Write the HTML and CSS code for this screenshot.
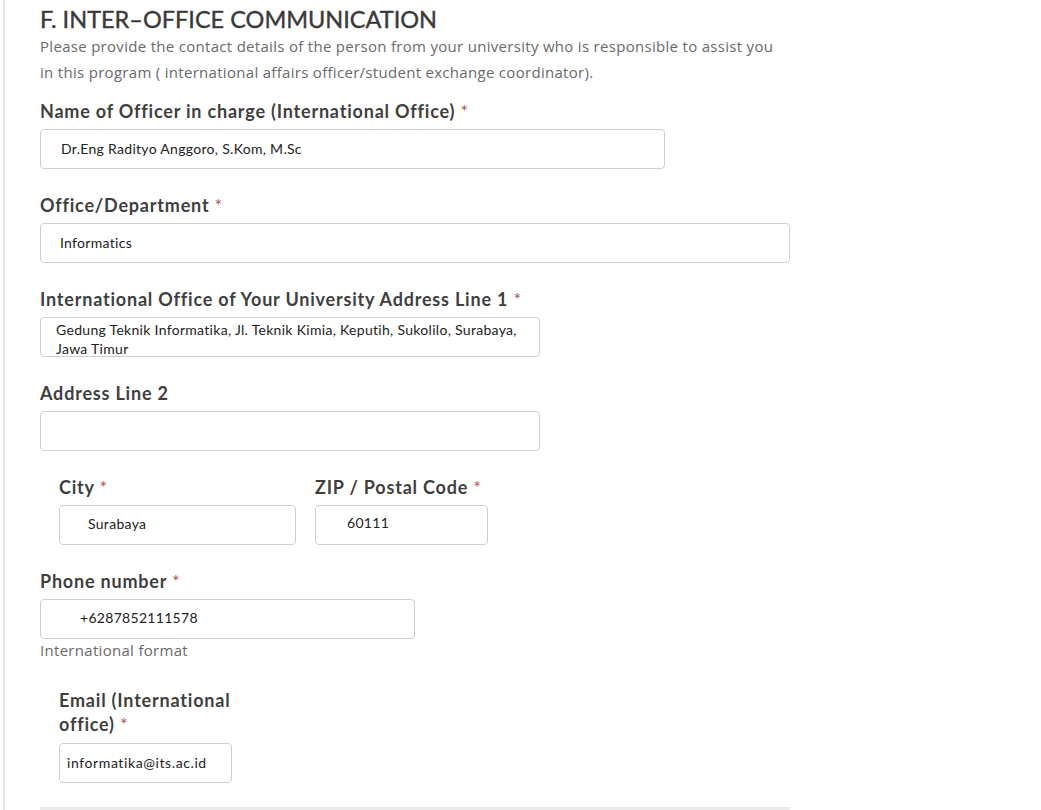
FILE: index.html
```html
<!DOCTYPE html>
<html>
<head>
<meta charset="utf-8">
<link rel="stylesheet" href="styles.css">
</head>
<body>
<div class="page">
  <h2 class="title">F. INTER–OFFICE COMMUNICATION</h2>
  <p class="desc">Please provide the contact details of the person from your university who is responsible to assist you<br>in this program ( international affairs officer/student exchange coordinator).</p>

  <div class="field">
    <label class="label">Name of Officer in charge (International Office) <span class="req">*</span></label>
    <input class="input w-name pad-name" type="text" value="Dr.Eng Radityo Anggoro, S.Kom, M.Sc">
  </div>

  <div class="field">
    <label class="label">Office/Department <span class="req">*</span></label>
    <input class="input w-full pad-office" type="text" value="Informatics">
  </div>

  <div class="field">
    <label class="label">International Office of Your University Address Line 1 <span class="req">*</span></label>
    <textarea class="input area w-addr">Gedung Teknik Informatika, Jl. Teknik Kimia, Keputih, Sukolilo, Surabaya,
Jawa Timur</textarea>
  </div>

  <div class="field">
    <label class="label">Address Line 2</label>
    <input class="input w-addr" type="text" value="">
  </div>

  <div class="field row">
    <div class="col">
      <label class="label">City <span class="req">*</span></label>
      <input class="input w-city pad-city" type="text" value="Surabaya">
    </div>
    <div class="col">
      <label class="label">ZIP / Postal Code <span class="req">*</span></label>
      <input class="input w-zip pad-zip" type="text" value="60111">
    </div>
  </div>

  <div class="field phone">
    <label class="label">Phone number <span class="req">*</span></label>
    <input class="input w-phone pad-phone" type="text" value="+6287852111578">
    <div class="help">International format</div>
  </div>

  <div class="field email">
    <label class="label narrow"><span class="line">Email (International</span><span class="line">office) <span class="req">*</span></span></label>
    <input class="input w-email pad-email" type="text" value="informatika@its.ac.id">
  </div>

  <div class="bar"></div>
</div>
</body>
</html>
```

FILE: styles.css
```css
html, body {
  margin: 0;
  padding: 0;
  background: #fff;
}
body {
  font-family: Lato, "Open Sans", sans-serif;
  color: #3d3d3d;
  overflow: hidden;
  height: 810px;
}
.page {
  margin-left: 3px;
  border-left: 2px solid #e6e6e6;
  padding-left: 35px;
  padding-top: 5px;
  min-height: 810px;
  box-sizing: border-box;
}
.title {
  margin: 0;
  font-family: Lato, sans-serif;
  font-weight: 400;
  font-size: 23.5px;
  line-height: 28px;
  color: #3a3a3a;
  letter-spacing: 0;
  -webkit-text-stroke: 0.4px #3a3a3a;
}
.desc {
  margin: 0 0 14px;
  font-family: "Open Sans", sans-serif;
  font-size: 15px;
  line-height: 26px;
  color: #6a6a6a;
  letter-spacing: 0.3px;
}
.field {
  margin-bottom: 24px;
  display: flex;
  flex-direction: column;
  align-items: flex-start;
}
.label {
  display: block;
  font-family: Lato, sans-serif;
  font-weight: 700;
  font-size: 18px;
  line-height: 24px;
  color: #3f3f3f;
  letter-spacing: 0.8px;
  margin-bottom: 6px;
}
.req {
  color: #b0524e;
  font-weight: 400;
}
.input {
  box-sizing: border-box;
  height: 40px;
  border: 1px solid #cfcfcf;
  border-radius: 4px;
  background: #fff;
  font-family: Lato, "Open Sans", sans-serif;
  font-size: 14px;
  letter-spacing: 0.3px;
  color: #222;
  padding: 0 10px 2px;
  outline: none;
  margin: 0;
}
.area {
  resize: none;
  overflow: hidden;
  padding: 2px 6px 0 15px;
  line-height: 19px;
}
.w-name { width: 625px; }
.w-full { width: 750px; }
.w-addr { width: 500px; }
.w-city { width: 237px; }
.w-zip { width: 173px; }
.w-phone { width: 375px; }
.w-email { width: 173px; }

.pad-name { padding-left: 20px; }
.pad-office { padding-left: 19px; }
.pad-city { padding-left: 28px; padding-bottom: 4px; }
.pad-zip { padding-left: 31px; padding-bottom: 6px; }
.pad-phone { padding-left: 39px; padding-bottom: 4px; }
.pad-email { padding-left: 7px; letter-spacing: 0.6px; }

.row {
  flex-direction: row;
  gap: 19px;
  padding-left: 19px;
}
.col {
  display: flex;
  flex-direction: column;
}
.phone { margin-bottom: 27px; }
.help {
  font-family: "Open Sans", sans-serif;
  font-size: 15px;
  letter-spacing: 0.3px;
  line-height: 22px;
  color: #6a6a6a;
}
.email {
  padding-left: 19px;
}
.narrow {
  width: 185px;
  margin-bottom: 7px;
}
.line {
  display: block;
}
.bar {
  width: 750px;
  height: 10px;
  background: #ebebeb;
}
```
